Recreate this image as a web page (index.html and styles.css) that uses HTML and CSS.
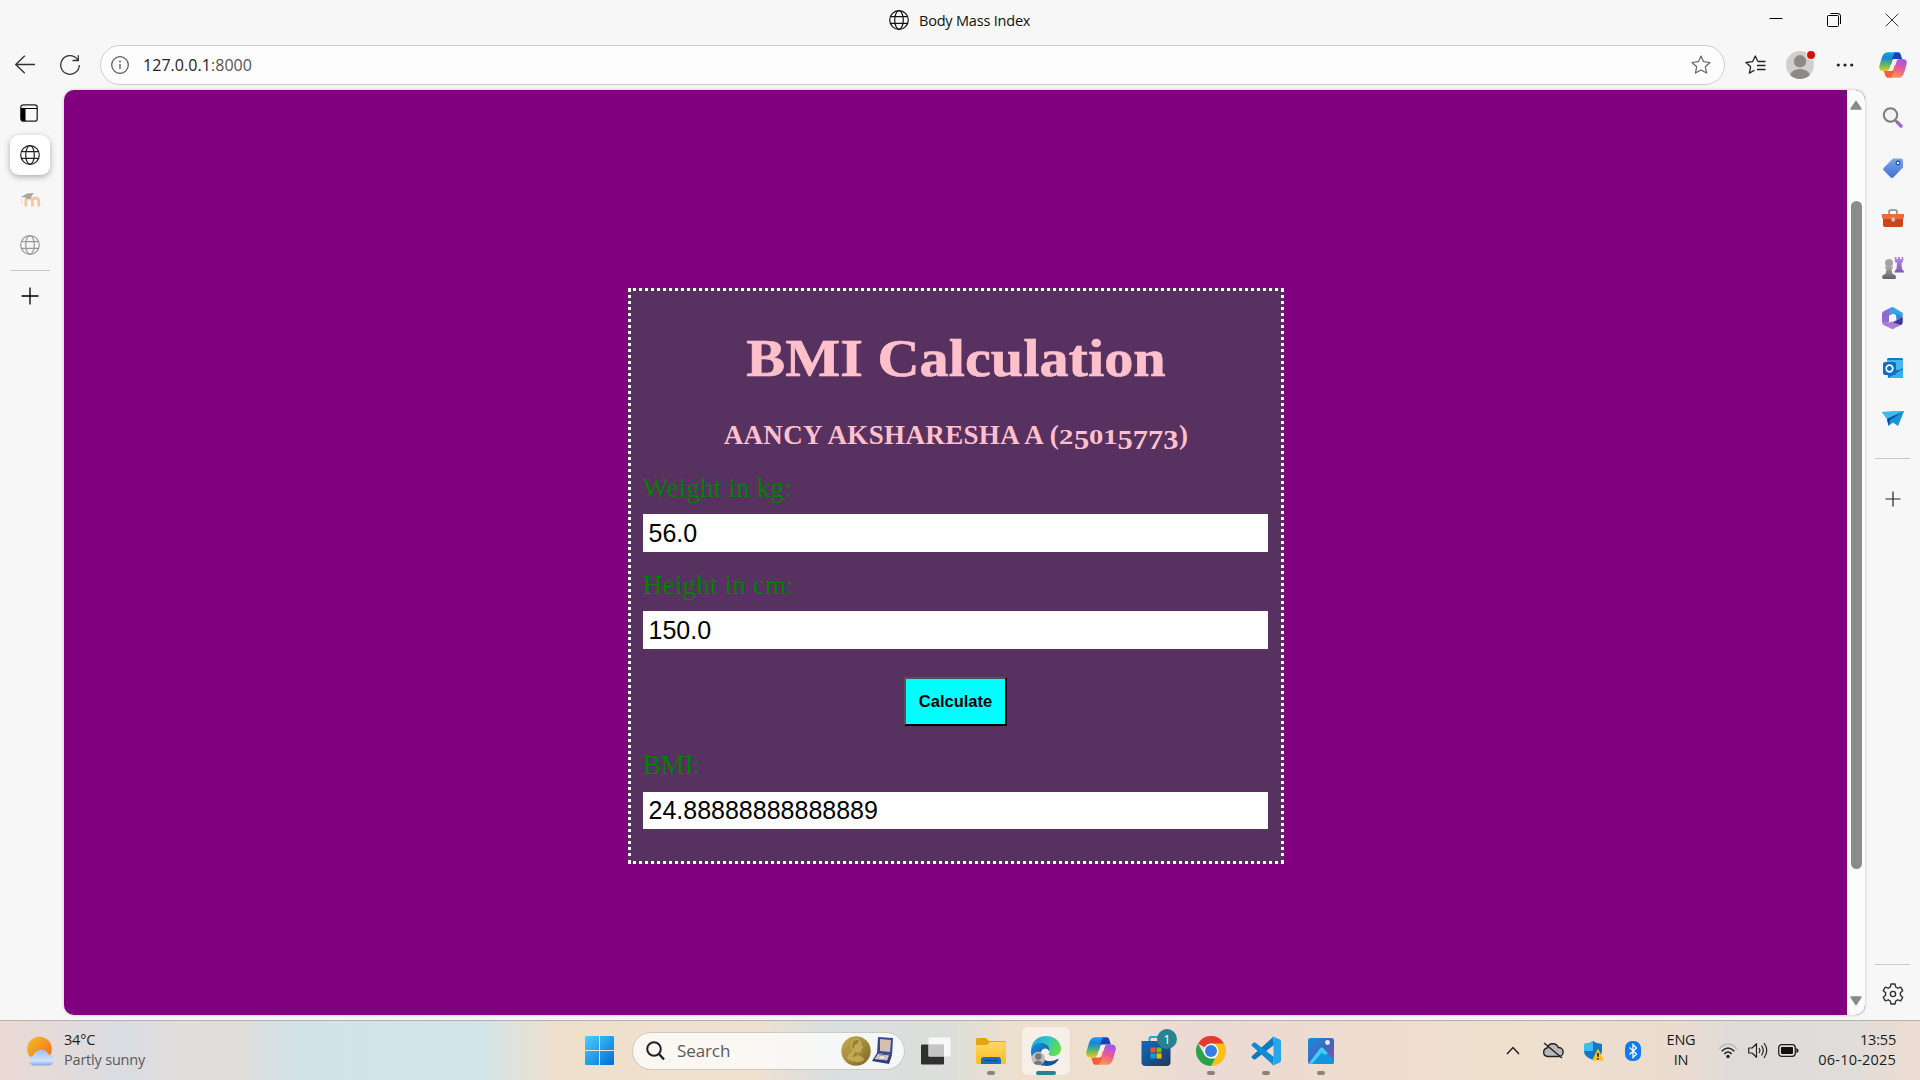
FILE: index.html
```html
<!DOCTYPE html>
<html lang="en">
<head>
<meta charset="utf-8">
<title>Body Mass Index</title>
<link rel="stylesheet" href="styles.css">
</head>
<body>
<svg class="defs" width="0" height="0" aria-hidden="true">
  <defs>
    <linearGradient id="cpA" x1="0" y1="0" x2="0" y2="1"><stop offset="0" stop-color="#10a5e8"/><stop offset=".3" stop-color="#1588d8"/><stop offset=".65" stop-color="#5ab66c"/><stop offset="1" stop-color="#f5c518"/></linearGradient>
    <linearGradient id="cpB" x1=".6" y1="0" x2=".3" y2="1"><stop offset="0" stop-color="#a255f0"/><stop offset=".5" stop-color="#ec5a94"/><stop offset="1" stop-color="#ff9a4d"/></linearGradient>
    <linearGradient id="win" x1="0" y1="0" x2="1" y2="1"><stop offset="0" stop-color="#4cd0ff"/><stop offset="1" stop-color="#006cd0"/></linearGradient>
    <linearGradient id="gray" x1="0" y1="0" x2="0" y2="1"><stop offset="0" stop-color="#aaa"/><stop offset="1" stop-color="#606060"/></linearGradient>
    <linearGradient id="violet" x1="0" y1="0" x2="0" y2="1"><stop offset="0" stop-color="#b68cf0"/><stop offset="1" stop-color="#8058b8"/></linearGradient>
    <linearGradient id="tag" x1="0" y1="0" x2="0" y2="1"><stop offset="0" stop-color="#76a9ee"/><stop offset="1" stop-color="#426fd0"/></linearGradient>
    <linearGradient id="sun" x1="0" y1="0" x2="1" y2="1"><stop offset="0" stop-color="#f0c030"/><stop offset="1" stop-color="#f26a10"/></linearGradient>
    <linearGradient id="cloud" x1="0" y1="0" x2="0" y2="1"><stop offset="0" stop-color="#9fc0f5"/><stop offset=".7" stop-color="#d4e2fa"/><stop offset="1" stop-color="#7fa6ea"/></linearGradient>
    <linearGradient id="edgeTop" x1="0" y1="0" x2="1" y2=".4"><stop offset="0" stop-color="#1c9fdc"/><stop offset=".5" stop-color="#2bc3d0"/><stop offset="1" stop-color="#62dc50"/></linearGradient>
    <linearGradient id="edgeLow" x1="0" y1="0" x2="1" y2="1"><stop offset="0" stop-color="#1690dc"/><stop offset="1" stop-color="#124a96"/></linearGradient>
    <linearGradient id="store" x1="0" y1="0" x2="1" y2="1"><stop offset="0" stop-color="#0f6cc0"/><stop offset="1" stop-color="#203860"/></linearGradient>
    <linearGradient id="photo" x1="0" y1="0" x2="1" y2="1"><stop offset="0" stop-color="#1290e0"/><stop offset=".55" stop-color="#4464bc"/><stop offset="1" stop-color="#9c4fa0"/></linearGradient>
    <linearGradient id="folder" x1="0" y1="0" x2="0" y2="1"><stop offset="0" stop-color="#ffd860"/><stop offset="1" stop-color="#f9bd28"/></linearGradient>
    <linearGradient id="gold" x1="0" y1="0" x2="1" y2="1"><stop offset="0" stop-color="#c9b052"/><stop offset="1" stop-color="#7d6622"/></linearGradient>
    <symbol id="globe" viewBox="0 0 20 20"><g fill="none" stroke="currentColor" stroke-width="1.2"><circle cx="10" cy="10" r="9.3"/><ellipse cx="10" cy="10" rx="4.3" ry="9.3"/><path d="M1.4 6.6h17.2M1.4 13.4h17.2"/></g></symbol>
    <symbol id="copilot" viewBox="0 0 30 28">
      <path d="M16 .2h4.500c1.800 0 2.500 1.300 3 3l1.300 4.300h-4c-2.600 0-3.800 1.500-4.500 4L15 15l-5-3 3-9z" fill="#1743b8"/>
      <path d="M14 27.800H9.500c-1.800 0-2.500-1.300-3-3l-1.300-4.300h4c2.600 0 3.800-1.500 4.500-4L15 13l5 3-3 9z" fill="#f4603c"/>
      <path d="M18.500.2H9.500C6 .2 4 2.500 3 6L.6 14c-1.200 4 .2 6.500 4 6.500h2.600c2.600 0 3.800-1.500 4.500-4L14.800 5.500C15.600 2.500 16.500.7 18.500.2z" fill="url(#cpA)"/>
      <path d="M11.500 27.800h9c3.500 0 5.500-2.300 6.500-5.800l2.400-8c1.200-4-.2-6.500-4-6.500h-2.600c-2.600 0-3.800 1.500-4.500 4l-3.100 11c-.8 3-1.700 4.800-3.700 5.300z" fill="url(#cpB)"/>
      <path d="m14.300 8.500-2.600 9.300q-.5 1.800-1.600 2.700h3.400q1.600 0 2.200-2.200l2.600-9.300q.5-1.400 1.600-1.500h-3.600q-1.500 0-2 1z" fill="#f5efe9"/>
    </symbol>
  </defs>
</svg>

<header class="titlebar">
  <div class="page-title"><svg width="20" height="20"><use href="#globe"/></svg><span>Body Mass Index</span></div>
  <div class="window-buttons">
    <svg width="14" height="14" viewBox="0 0 14 14"><path d="M.5 5.500h13" stroke="#000"/></svg>
    <svg width="14" height="14" viewBox="0 0 14 14" fill="none" stroke="#000"><rect x=".5" y="2.500" width="11" height="11" rx="1"/><path d="M3.500.500H11a2.500 2.500 0 0 1 2.500 2.500V11"/></svg>
    <svg width="14" height="14" viewBox="0 0 14 14"><path d="M.7.700l12.600 12.600M13.300.700.7 13.300" stroke="#333"/></svg>
  </div>
</header>

<nav class="toolbar">
  <svg class="back" width="20" height="20" viewBox="0 0 20 20" fill="none" stroke="#333" stroke-width="1.300"><path d="M20 9.500H.8M9.800.800.8 9.500l9 8.700"/></svg>
  <svg class="reload" width="20" height="20" viewBox="0 0 20 20" fill="none" stroke="#333" stroke-width="1.300"><path d="M18 5.200A9.300 9.300 0 1 0 19.300 10M18.300.200v5.300h-5.800"/></svg>
  <div class="address">
    <svg width="18" height="18" viewBox="0 0 18 18"><circle cx="9" cy="9" r="8.300" fill="none" stroke="#555" stroke-width="1.200"/><path d="M9 8v5" stroke="#555" stroke-width="1.300"/><circle cx="9" cy="5.500" r=".9" fill="#555"/></svg>
    <span class="url">127.0.0.1<span class="port">:8000</span></span>
    <svg class="star" width="20" height="20" viewBox="0 0 20 20"><path d="M10 1l2.600 5.700 6.400.8-4.700 4.300 1.300 6.300L10 15l-5.600 3.100 1.300-6.300L1 7.500l6.400-.8z" fill="none" stroke="#666" stroke-width="1.200" stroke-linejoin="round"/></svg>
  </div>
  <svg class="favs" width="21" height="20" viewBox="0 0 21 20" fill="none" stroke="#222" stroke-width="1.300" stroke-linejoin="round"><path d="M12.800 6.500 10.300 1 7.500 6.700l-6.500.8 4.600 4.300-1.200 6.300 5.200-2.900M13 6.500h7.500M12 10.500h8.500M12 14.500h8.500"/></svg>
  <svg class="avatar" width="32" height="32" viewBox="0 0 32 32"><clipPath id="av"><circle cx="16" cy="16" r="14"/></clipPath><circle cx="16" cy="16" r="14" fill="#d1cfcc"/><g clip-path="url(#av)" fill="#8d8986"><circle cx="16" cy="12.300" r="6.200"/><ellipse cx="16" cy="27" rx="10" ry="7"/></g><circle cx="27" cy="6" r="5" fill="#f7f7f7"/><circle cx="27" cy="6" r="4" fill="#e00b0b"/></svg>
  <svg class="more" width="18" height="4" viewBox="0 0 18 4" fill="#222"><circle cx="2.300" cy="2" r="1.600"/><circle cx="9" cy="2" r="1.600"/><circle cx="15.700" cy="2" r="1.600"/></svg>
  <svg class="cp" width="28" height="26"><use href="#copilot"/></svg>
</nav>

<div class="workspace">
  <aside class="tabs">
    <div class="tab-menu"><svg width="18" height="18" viewBox="0 0 18 18"><rect x=".8" y=".8" width="16.400" height="16.400" rx="2.500" fill="none" stroke="#222" stroke-width="1.300"/><path d="M1 4.500h4.500V17H3q-2 0-2-2zM1 4h16v1H1z" fill="#000"/></svg></div>
    <div class="tab active"><svg width="20" height="20"><use href="#globe"/></svg></div>
    <div class="tab moodle"><svg width="21" height="16" viewBox="0 0 21 16"><path d="M5.800 14.500V9.500q0-3.500 3.300-3.500t3.300 3.500v5M12.400 9.500q0-3.500 3.200-3.500t3.200 3.500v5" fill="none" stroke="#f5c9a0" stroke-width="2.800"/><path d="M1.500 6v6" stroke="#f5dcc8"/><path d="M1 5 7 1.500l7-.5-2 2.500-2 3.500-4-.5-.5-1z" fill="#a5a5a5"/></svg></div>
    <div class="tab idle"><svg width="20" height="20"><use href="#globe"/></svg></div>
    <div class="rule"></div>
    <div class="tab new"><svg width="18" height="18" viewBox="0 0 18 18"><path d="M9 .500v17M.500 9h17" stroke="#000" stroke-width="1.300"/></svg></div>
  </aside>

  <main class="viewport">
    <form class="card">
      <h1>BMI Calculation</h1>
      <h2>AANCY AKSHARESHA A (<span class="fig short one">2</span><span class="fig low one">5</span><span class="fig short">01</span><span class="fig low">5773</span>)</h2>
      <label for="weight">Weight in kg:</label>
      <input id="weight" type="text" value="56.0">
      <label for="height">Height in cm:</label>
      <input id="height" type="text" value="150.0">
      <button type="button">Calculate</button>
      <label class="bmi-label" for="bmi">BMI:</label>
      <input class="result" id="bmi" type="text" value="24.88888888888889">
    </form>
    <div class="scrollbar">
      <svg width="12" height="10" viewBox="0 0 12 10"><path d="M6 1.500 11 9H1z" fill="#8a8a8a" stroke="#8a8a8a" stroke-width="1.500" stroke-linejoin="round"/></svg>
      <div class="thumb"></div>
      <svg class="down" width="12" height="10" viewBox="0 0 12 10"><path d="M6 8.500 11 1H1z" fill="#8a8a8a" stroke="#8a8a8a" stroke-width="1.500" stroke-linejoin="round"/></svg>
    </div>
  </main>

  <aside class="apps">
    <div class="app"><svg width="22" height="22" viewBox="0 0 22 22"><path d="m15.500 15.500 3.500 3.500" stroke="#9b6bd0" stroke-width="3.600" stroke-linecap="round"/><path d="m12 12 3 3" stroke="#777" stroke-width="2"/><circle cx="8.500" cy="8" r="6.700" fill="#f2f2f2" stroke="#7b7b7b" stroke-width="2"/></svg></div>
    <div class="app"><svg width="20" height="20" viewBox="0 0 20 20"><path d="M10 .500h8q2 0 2 2v7L10.500 19.200q-1.500 1.300-3 0l-6.700-6.700q-1.300-1.300 0-2.700z" fill="url(#tag)"/><circle cx="15" cy="5" r="1.900" fill="#e8effc" stroke="#27458f" stroke-width="1.100"/></svg></div>
    <div class="app"><svg width="22" height="18" viewBox="0 0 22 18"><path d="M7 5V3q0-2 2-2h4q2 0 2 2v2" fill="none" stroke="#858585" stroke-width="1.500"/><rect x="1" y="6" width="20" height="12" rx="2" fill="#cf431c"/><path d="M0 5h22v3q0 2-2 2H2Q0 10 0 8z" fill="#eb6b35"/><rect x="9.500" y="8.500" width="3.500" height="4" rx="1" fill="#c7c7c7"/></svg></div>
    <div class="app"><svg width="22" height="22" viewBox="0 0 22 22"><circle cx="7" cy="6" r="4" fill="#a5a5a5"/><path d="M3 9.500h8v2H9.500l1 5.500q3.500.500 3.500 3t-2 2H2q-2 0-2-2t3.500-3l1-5.500H3z" fill="url(#gray)"/><path d="M12.500 0h2v2h1.500V0h2v2h1.500V0h2L21 5l-1.500 1 .5 6q2 1 2 3.500h-9.500q0-2.500 2-3.500l.5-6L13 5z" fill="url(#violet)"/></svg></div>
    <div class="app"><svg width="21" height="22" viewBox="0 0 21 22"><path d="M10.500 0 20.500 6v10L14 13V8l-4-2z" fill="#3489dd"/><path d="M8 1 10.500 0 13 6 7 8v7L0 16V6.500Q0 5 2 4z" fill="#8b6bd2"/><path d="M10.500 0 7 3v6l5-3 8.500 3V6z" fill="#37a3ec"/><path d="m0 14 7 1.500L20.500 10v5.500q0 1.500-1.500 2.500l-7 3.500q-1.500 1-3 0L1.500 18Q0 17 0 15z" fill="#a87cdd"/><path d="m20.500 10-6.500 4-3 1.500 8 2.500q1.500-1 1.500-2.500z" fill="#3a3a91"/><path d="m10.500 7 3.700 2v4l-3.700 2L7 13V9z" fill="#f4f7fb"/></svg></div>
    <div class="app"><svg width="20" height="20" viewBox="0 0 20 20"><path d="M5 0h13q2 0 2 2v10H4V1z" fill="#45b7ee"/><path d="M5 0h13q2 0 2 2H4z" fill="#167bc1"/><path d="M4 12h16v8H5z" fill="#1478c8"/><path d="m20 10-9 5 9 5z" fill="#1061a4"/><path d="M5 20 20 11v9z" fill="#35b2ee"/><rect y="4" width="13" height="13" rx="2" fill="#0870c8"/><circle cx="6.500" cy="10.500" r="3.300" fill="none" stroke="#fff" stroke-width="1.700"/></svg></div>
    <div class="app"><svg width="22" height="15" viewBox="0 0 22 15"><path d="m0 1 22-1-6 15-5-3.500L6.500 15 5 8z" fill="#1593df"/><path d="M22 0 5 8l1.500 7L8 9z" fill="#0c4c94"/><path d="M0 1 22 0 5 7.500z" fill="#38bdf0"/></svg></div>
    <div class="rule"></div>
    <div class="app add"><svg width="16" height="16" viewBox="0 0 16 16"><path d="M8 .500v15M.500 8h15" stroke="#222" stroke-width="1.200"/></svg></div>
    <div class="rule bottom"></div>
    <div class="app settings"><svg width="22" height="22" viewBox="0 0 22 22" fill="none" stroke="#333" stroke-width="1.400" stroke-linejoin="round"><path d="M9 1h4l.7 3 2 1.200 3-1 2 3.500-2.300 2.100v2.400l2.300 2.100-2 3.500-3-1-2 1.200L13 21H9l-.7-3-2-1.200-3 1-2-3.500 2.300-2.100V9.800L1.300 7.700l2-3.500 3 1L8.300 4z"/><circle cx="11" cy="11" r="2.600"/></svg></div>
  </aside>
</div>

<footer class="taskbar">
  <div class="weather">
    <svg width="28" height="30" viewBox="0 0 28 30"><circle cx="12.500" cy="13" r="12.300" fill="url(#sun)"/><path d="M6.500 29.500a5 5 0 0 1-.5-9.800 8.500 8.500 0 0 1 15.500-1.500 5.700 5.700 0 0 1 1 11.300z" fill="url(#cloud)"/></svg>
    <div class="weather-text"><span>34°C</span><span class="muted">Partly sunny</span></div>
  </div>
  <svg class="start" width="29" height="29" viewBox="0 0 29 29"><path d="M1 0h13v14H0V1q0-1 1-1zM15 0h13q1 0 1 1v13H15zM0 15h14v14H1q-1 0-1-1zM15 15h14v13q0 1-1 1H15z" fill="url(#win)"/></svg>
  <div class="search">
    <svg width="19" height="20" viewBox="0 0 19 20"><circle cx="8" cy="8" r="6.800" fill="none" stroke="#222" stroke-width="2"/><path d="m13 13 5 5.500" stroke="#222" stroke-width="2.400"/></svg>
    <span>Search</span>
    <svg class="prize" width="52" height="30" viewBox="0 0 52 30"><circle cx="15" cy="15" r="14.700" fill="url(#gold)"/><path d="M12 4q6-3 8 2l1 3.500 1.500 2.500-1.800.8-.2 3.200-3.500.5.500 3q5 1.500 6 4.500-8 5-17.500-1l1-4 4-4q-3-6 1-11z" fill="#c8b05c" opacity=".8"/><path d="M12 5.500q3-2.500 6-1l-1.500 3-3 1.500-1 4.500-1.500-3z" fill="#8a7330" opacity=".8"/><path d="m14 16.500 3 .3-1.500 3.200-4 1z" fill="#7a6428" opacity=".6"/><path d="m37 1 15 1-1 17-15-2z" fill="#344b91"/><path d="m39 3 11 1-1 12-10-1z" fill="#d4c1b4"/><path d="m36 17 15 2-3 9-17-3z" fill="#293d80"/><path d="m37 18 11 1.500-2 5L33.500 23z" fill="#d8cdc8"/><ellipse cx="41" cy="21.500" rx="4" ry="2" fill="#eee5dc" stroke="#8d807a" stroke-width=".6"/></svg>
  </div>
  <div class="task taskview"><svg width="30" height="28" viewBox="0 0 30 28"><rect y="7.500" width="23" height="20" rx="1" fill="#303030"/><rect x="7.500" y=".500" width="22" height="19" rx="1" fill="#fafafa" opacity=".9"/><path d="M7.500 7.500H23v12H7.500z" fill="#c5c5c5"/></svg></div>
  <div class="task open"><svg width="30" height="28" viewBox="0 0 30 28"><path d="M0 2.500Q0 1 1.500 1H10l3 3h15.500Q30 4 30 6v6H0z" fill="#e5a50e"/><path d="M0 8h11l3-3h14.500Q30 5 30 6.500V27H1.500Q0 27 0 25.500z" fill="url(#folder)"/><path d="M5 27v-4q0-3 3-3h14q3 0 3 3v4z" fill="#0f70c4"/><path d="M8.500 23.500h13" stroke="#074f93" stroke-width="1.200"/></svg></div>
  <div class="task open current"><svg width="30" height="30" viewBox="0 0 30 30"><path d="M0 14C1 5 7 0 15 0c9 0 15 6 15 12.500 0 5-3.500 7.500-8 7.500-3.500 0-5-1.300-4-3 1-1.500.5-6-5.500-6C6 11 2 13 0 17z" fill="url(#edgeTop)"/><path d="M0 16c1-7 6-9.500 11-9 5 .500 8 4 7 8-2-4-7-3-8 1-1.500 7 5 12 13 9-4 4-8 5-12 4.500C4.500 28.500 0 23 0 16z" fill="url(#edgeLow)"/><path d="M10 17c0 7 7 9.500 13 7.500 3-1 4.500-2 4.500-1-1.500 3-6 6.500-12 6.500C9 29 7 22 10 17z" fill="#12549f"/><circle cx="7.300" cy="22.500" r="6.700" fill="#bebebe"/><circle cx="7.300" cy="20.500" r="3.200" fill="#777"/><path d="M2.500 27q4.500-5 9.500 0-4.500 4-9.500 0z" fill="#777"/></svg></div>
  <div class="task"><svg width="30" height="28"><use href="#copilot"/></svg></div>
  <div class="task store"><svg width="30" height="30" viewBox="0 0 30 30"><path d="M8.500 7V3q0-2 2-2h9q2 0 2 2v4" fill="none" stroke="#18a8e8" stroke-width="2"/><path d="M.5 5h29v21q0 4-4 4h-21q-4 0-4-4z" fill="url(#store)"/><path d="M9.500 11.500h5v5h-5z" fill="#f15325"/><path d="M15.500 11.500h5v5h-5z" fill="#7fbb00"/><path d="M9.500 17.500h5v5h-5z" fill="#00a4ee"/><path d="M15.500 17.500h5v5h-5z" fill="#ffb902"/></svg><span class="badge">1</span></div>
  <div class="task open"><svg width="30" height="30" viewBox="0 0 30 30"><path d="M15 15 2 7.500A15 15 0 0 1 28 7.500z" fill="#e33b2e"/><path d="M15 7.500h13A15 15 0 0 1 15 30l6.500-11.300z" fill="#fbc116"/><path d="M2 7.500 8.500 18.800 15 22.500h4.300L15 30A15 15 0 0 1 2 7.500z" fill="#2ba24c"/><circle cx="15" cy="15" r="7.500" fill="#fff"/><circle cx="15" cy="15" r="6" fill="#357de8"/></svg></div>
  <div class="task open"><svg width="30" height="30" viewBox="0 0 30 30"><path d="M22 1 1 20q-1 1 0 2l1.500 1.300q1 .7 2 0L23 9z" fill="#0d78c0"/><path d="M22 29 1 10Q0 9 1 8l1.500-1.300q1-.7 2 0L23 21z" fill="#128dd2"/><path d="m21 0 7.500 3.200Q30 4 30 5.500v19q0 1.500-1.500 2.300L21 30q1.500-1 1.500-3V3q0-2-1.500-3z" fill="#28a6ed"/></svg></div>
  <div class="task open"><svg width="26" height="26" viewBox="0 0 26 26"><rect width="26" height="26" rx="2.500" fill="url(#photo)"/><path d="M1 25 12 10.500q1.500-2 3.500 0L26 22v1.500q0 2.500-2.500 2.500H3q-1.500 0-2-1z" fill="#1493df"/><path d="M1 25 12 10.500q1.500-2 3.500 0l4.500 5-3.500 1.500-2.500-2.500L4 26H3z" fill="#3fcdf7"/><circle cx="19.500" cy="4.500" r="2.400" fill="#e8f2ff"/></svg></div>

  <div class="tray">
    <svg class="caret" width="14" height="9" viewBox="0 0 14 9"><path d="m1 8 6-6.500L13 8" fill="none" stroke="#222" stroke-width="1.500"/></svg>
    <svg class="sync" width="22" height="17" viewBox="0 0 22 17"><path d="M5.500 14.500a4.300 4.300 0 0 1-.3-8.500 5.800 5.800 0 0 1 11-.5 4.500 4.500 0 0 1 .8 9z" fill="#b9b9b9" stroke="#222" stroke-width="1.400"/><path d="M2 1 20 16" stroke="#222" stroke-width="1.500"/></svg>
    <svg class="shield" width="20" height="20" viewBox="0 0 20 20"><path d="M9 0q4 3 9 3v7q0 6-9 9Q0 16 0 10V3q5 0 9-3z" fill="#1276cb"/><path d="M9 0v10H0V3q5 0 9-3z" fill="#39bdf2"/><path d="M14 7.500 20 19.500H8z" fill="#fdc116"/><path d="M14 12v3.700M14 17v1.500" stroke="#111" stroke-width="1.500"/></svg>
    <svg class="bt" width="16" height="20" viewBox="0 0 16 20"><rect width="16" height="20" rx="7" fill="#0a7df3"/><path d="m4.500 6.500 7 6.500L8 16.500v-13L11.500 7l-7 6.500" fill="none" stroke="#fff" stroke-width="1.300"/></svg>
    <div class="lang"><span>ENG</span><span>IN</span></div>
    <svg class="wifi" width="20" height="16" viewBox="0 0 20 16" fill="none" stroke="#222" stroke-width="1.500"><path d="M1 6q9-10 18 0" stroke="#bbb"/><path d="M3.700 8.300q6.300-6.600 12.600 0M6.300 11q3.700-4 7.400 0"/><circle cx="10" cy="13.500" r="1.700" fill="#222" stroke="none"/></svg>
    <svg class="sound" width="20" height="17" viewBox="0 0 20 17" fill="none" stroke="#222" stroke-width="1.200"><path d="M.7 6H4l4.500-4.300v13.600L4 11H.7z" stroke-linejoin="round"/><path d="M11 6q1.700 2.500 0 5M13.500 3.500q3.500 5 0 10M16 1q5.500 7.500 0 15"/></svg>
    <svg class="battery" width="21" height="13" viewBox="0 0 21 13"><rect x=".7" y=".7" width="16.600" height="11.600" rx="3" fill="none" stroke="#222" stroke-width="1.300"/><rect x="3" y="3" width="12" height="7" rx="1" fill="#111"/><path d="M18.300 4q2.300.500 2.300 2.500T18.300 9z" fill="#222"/></svg>
    <div class="clock"><span>13:55</span><span class="date">06-10-2025</span></div>
  </div>
</footer>
</body>
</html>
```
FILE: styles.css
```css
* { box-sizing: border-box; }
body {
  margin: 0;
  width: 1920px;
  height: 1080px;
  overflow: hidden;
  background: #f7f7f7;
  color: #1b1b1b;
  font-family: "Open Sans", "Noto Sans", sans-serif;
  display: flex;
  flex-direction: column;
}
svg { display: block; flex: none; }
.defs { position: absolute; }

/* Window title */
.titlebar { height: 40px; flex: none; display: flex; align-items: center; padding-left: 889px; }
.page-title { display: flex; align-items: center; gap: 10px; font-size: 14.5px; letter-spacing: -.2px; color: #111; }
.window-buttons { margin-left: auto; display: flex; gap: 44px; padding-right: 21px; }

/* Navigation row */
.toolbar { height: 50px; flex: none; display: flex; align-items: center; }
.back { margin-left: 15px; }
.reload { margin-left: 25px; }
.address {
  margin-left: 20px;
  width: 1625px;
  height: 40px;
  border: 1px solid #cdcdcd;
  border-radius: 20px;
  background: #fdfdfd;
  display: flex;
  align-items: center;
  padding: 0 13px 0 10px;
}
.url { margin-left: 14px; font-size: 16px; letter-spacing: .05px; color: #222; }
.port { color: #555; }
.star { margin-left: auto; }
.favs { margin-left: 20px; }
.avatar { margin-left: 18px; }
.more { margin-left: 20px; }
.cp { margin-left: 25px; }

/* Browser body */
.workspace { height: 930px; flex: none; display: flex; }
.tabs { width: 64px; flex: none; display: flex; flex-direction: column; padding-left: 10px; color: #222; }
.tab-menu { height: 45px; width: 38px; display: grid; place-items: center; }
.tab { width: 40px; height: 40px; margin-bottom: 5px; display: grid; place-items: center; border-radius: 9px; }
.tab.active { background: #fff; box-shadow: 0 2px 6px rgba(0, 0, 0, .3); }
.tab.idle { color: #999; }
.tab.new { margin-top: 5px; width: 39px; }
.rule { height: 1px; width: 40px; background: #c8c8c8; }

.viewport {
  width: 1801px;
  height: 925px;
  flex: none;
  display: flex;
  background: #800080;
  border-radius: 10px;
  overflow: hidden;
  box-shadow: 0 0 3px rgba(0, 0, 0, .25);
}
.scrollbar {
  width: 18px;
  margin-left: auto;
  background: #fcfcfc;
  display: flex;
  flex-direction: column;
  align-items: center;
  padding: 10px 0 9px;
}
.thumb { width: 11px; height: 668px; margin-top: 91px; border-radius: 6px; background: #8b8b8b; }
.down { margin-top: auto; }

/* BMI form */
.card {
  width: 656px;
  height: 576px;
  margin: 198px 0 0 564px;
  padding: 0 12px;
  border: 3px dotted #fff;
  background: #57315f;
  font-family: "Liberation Serif", serif;
  display: flex;
  flex-direction: column;
}
.card h1 {
  margin: 37px 0 0;
  color: pink;
  font-size: 53px;
  line-height: 60px;
  text-align: center;
  transform: scaleX(1.1);
  -webkit-text-stroke: .6px pink;
}
.card h2 {
  margin: 31px 0 4px;
  color: pink;
  font-size: 27px;
  line-height: 32px;
  letter-spacing: .35px;
  text-align: center;
  white-space: nowrap;
}
/* Old-style figures */
.fig { display: inline-block; line-height: 0; letter-spacing: 0; }
.short { font-size: 20.5px; margin: 0 4.3px; transform: scaleX(1.4); }
.short.one { margin: 0 2.2px; }
.low { vertical-align: -5px; margin: 0 3.500px; transform: scaleX(1.13); }
.low.one { margin: 0 .9px; }
.card label { margin-top: 17px; color: green; font-size: 27px; line-height: 32px; letter-spacing: .2px; }
.card input {
  width: 625px;
  height: 38px;
  margin-top: 10px;
  padding: 0 5.500px;
  border: 0;
  background: #fff;
  color: #000;
  font: 25px "Liberation Sans", sans-serif;
}
.card button {
  width: 103px;
  height: 49px;
  margin: 28px 0 0 261px;
  padding: 0;
  border: 2px outset #000;
  background: #0ff;
  color: #000;
  font: bold 16.500px "Liberation Sans", sans-serif;
  white-space: nowrap;
}
.card .bmi-label { margin-top: 23px; letter-spacing: -.3px; }
.card .result { height: 37px; margin-top: 11px; }

/* Right app strip */
.apps { flex: 1; display: flex; flex-direction: column; align-items: center; padding-top: 3px; }
.app { width: 54px; height: 50px; display: grid; place-items: center; flex: none; }
.apps .rule { width: 35px; margin-top: 15px; }
.apps .add { margin-top: 15px; }
.apps .bottom { margin-top: auto; }
.apps .settings { height: 55px; padding-top: 2px; }

/* Taskbar */
.taskbar {
  height: 60px;
  flex: none;
  display: flex;
  align-items: center;
  border-top: 1px solid #b4b0ae;
  background: linear-gradient(90deg, #e9dad4 0, #e5dbd8 50px, #dadce3 115px, #e1dedb 180px, #e0dedb 240px, #d1e2e8 295px, #d0e6eb 380px, #d2e5e9 480px, #efdfcd 555px, #f0e0ce 750px, #d9dfe1 830px, #dddeda 950px, #efe0ce 1020px, #efdfce 1110px, #ebdad4 1200px, #eedccf 1350px, #efe0cd 1500px, #ecdccf 1670px, #dfdbda 1740px, #e0dddb 1850px, #ebddd2 1910px);
}
.weather { width: 585px; padding-left: 27px; display: flex; align-items: center; gap: 9px; }
.weather-text, .lang, .clock { display: flex; flex-direction: column; font-size: 14.5px; line-height: 20px; letter-spacing: -.2px; padding-bottom: 2px; }
.muted { color: #5a5856; }
.search {
  width: 273px;
  height: 38px;
  margin-left: 18px;
  padding: 0 12px 0 13px;
  border: 1px solid #cfc8c0;
  border-radius: 19px;
  background: rgba(255, 255, 255, .75);
  display: flex;
  align-items: center;
}
.search span { margin-left: 12px; font-size: 17px; letter-spacing: -.1px; color: #5c5a58; }
.prize { margin-left: auto; margin-right: -1px; }
.task { position: relative; width: 48px; height: 48px; margin-left: 7px; display: grid; place-items: center; border-radius: 5px; }
.task.open::after { content: ""; position: absolute; bottom: 0; left: 20px; width: 8px; height: 4px; border-radius: 2px; background: #8a817b; }
.current { background: rgba(255, 255, 255, .5); box-shadow: 0 0 1px #bbb; }
.task.current::after { left: 14px; width: 20px; background: #278391; }
.badge { position: absolute; left: 25px; top: 2px; width: 20px; height: 20px; border-radius: 50%; background: #278391; color: #fff; font-size: 13px; line-height: 20px; text-align: center; }
.tray { margin-left: auto; padding-right: 24px; display: flex; align-items: center; }
.sync { margin-left: 22px; }
.shield { margin-left: 20px; }
.bt { margin-left: 21px; }
.lang { margin-left: 20px; width: 40px; align-items: center; }
.wifi { margin-left: 17px; }
.sound { margin-left: 10px; }
.battery { margin-left: 10px; }
.clock { width: 97px; align-items: flex-end; }
.date { letter-spacing: .2px; }
```
